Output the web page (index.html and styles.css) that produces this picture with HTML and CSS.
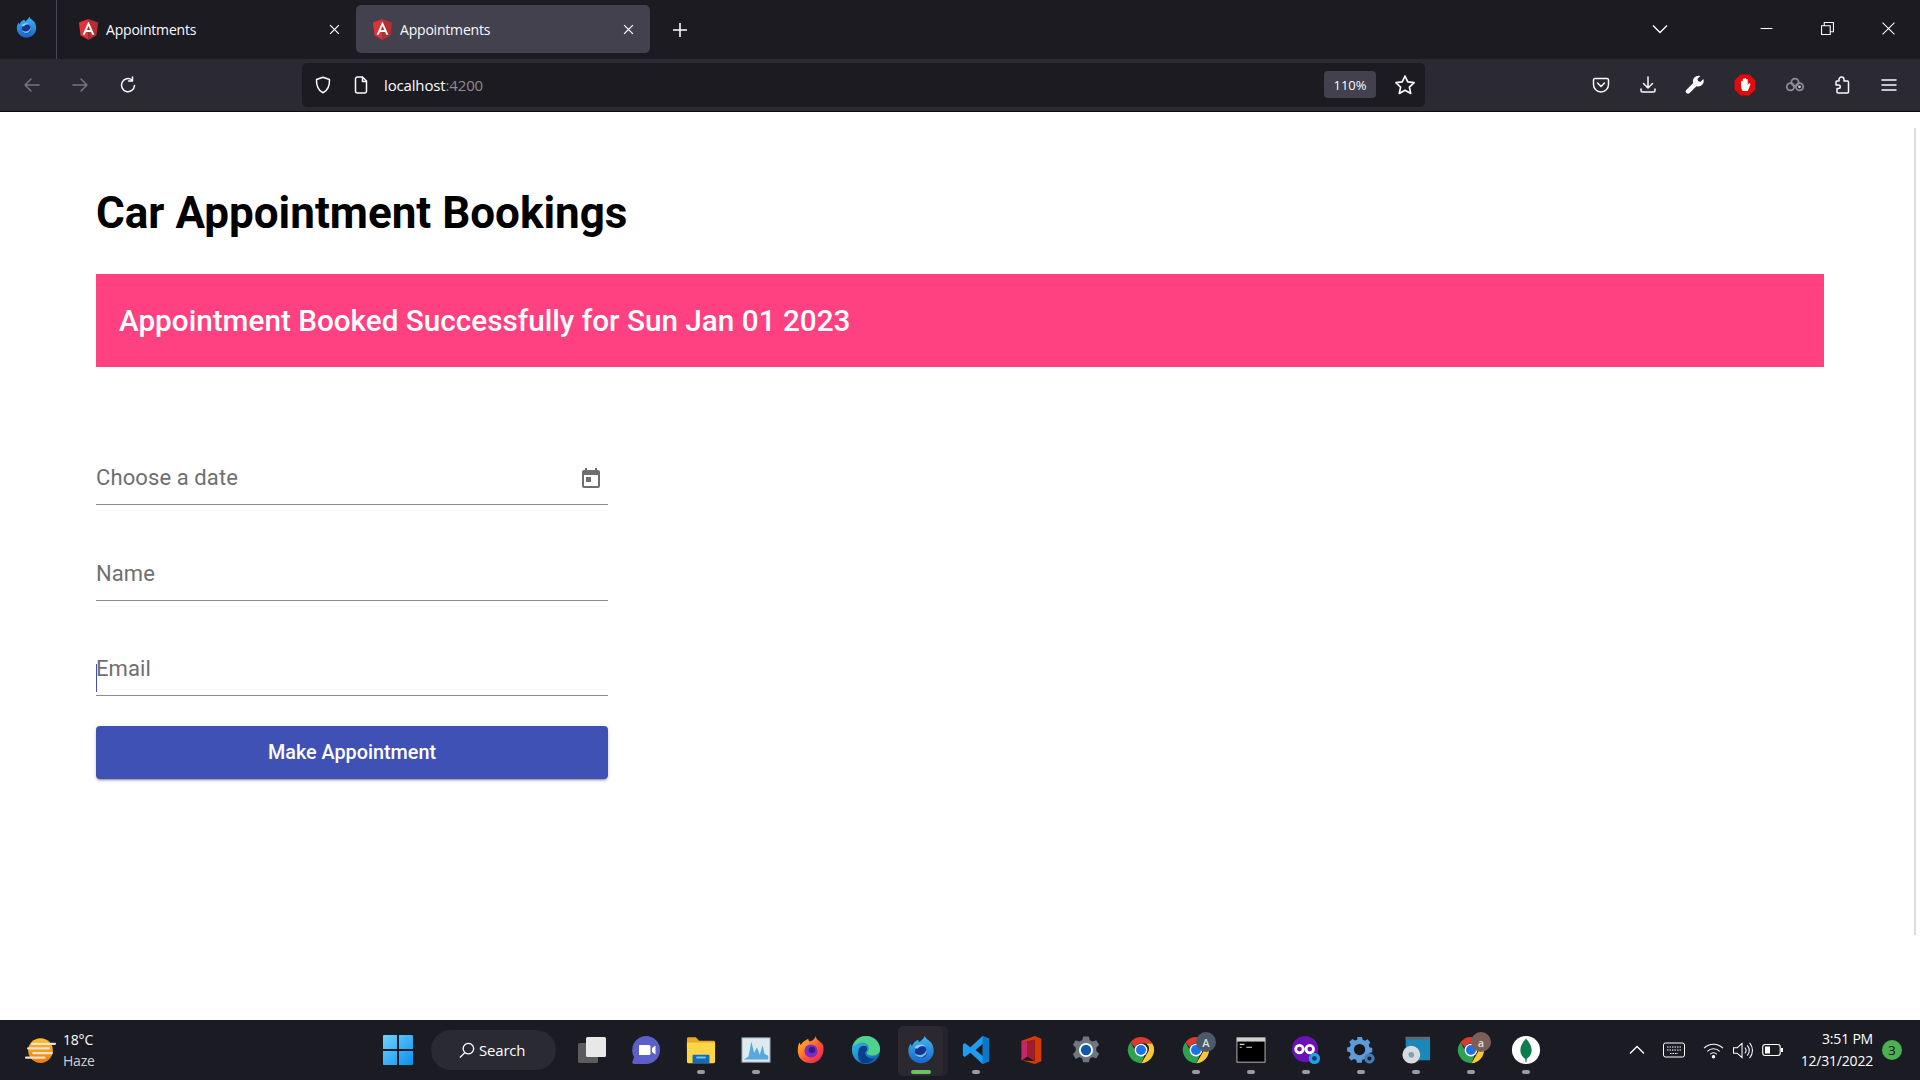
FILE: index.html
```html
<!DOCTYPE html>
<html lang="en">
<head>
<meta charset="utf-8">
<title>Appointments</title>
<link rel="stylesheet" href="styles.css">
</head>
<body>
<svg class="defs" width="0" height="0" aria-hidden="true">
  <defs>
    <symbol id="ng" viewBox="0 0 24 24">
      <path d="M12 1 2 4.6 3.6 18 12 23z" fill="#e23237"/>
      <path d="M12 1l10 3.6L20.4 18 12 23z" fill="#b52e31"/>
      <path d="M12 3.6 5.8 17.6h2.3l1.25-3.1h5.3l1.25 3.1h2.3zM13.8 12.6h-3.6L12 8.3z" fill="#fff"/>
    </symbol>
    <linearGradient id="ffd" x1="0" y1="0" x2="0" y2="1"><stop offset="0" stop-color="#3fb8f5"/><stop offset="1" stop-color="#1866c9"/></linearGradient>
    <symbol id="ffdev" viewBox="0 0 32 32">
      <path d="M20 1c1 3 4 4 5.500 6 2 1 4 5 4 10 0 7-6 13-13.500 13S2.500 24 2.500 17c0-3 1-6 2.500-8 0 1 .5 2 1.500 2.500C8 7.500 11 6 13 5c0 1 .5 2 1.500 2.500C16 6 19 4 20 1z" fill="url(#ffd)"/>
      <circle cx="16" cy="18" r="6.500" fill="#1c2f8c"/>
      <path d="M9 13c3-3 8-4 12-1-3-1-7 0-8 2-1 1-3 0-4-1z" fill="#7fd4fa"/>
      <path d="M22 15c1 5-2 8-6 9-3 0-6-2-7-5 2 2 5 3 8 2s4-3 5-6z" fill="#5ec4f6"/>
    </symbol>
    <symbol id="chrome" viewBox="0 0 32 32">
      <path d="M16 2a14 14 0 0 1 12.100 7H16a7 7 0 0 0-6.500 4.400L4.800 7.600A14 14 0 0 1 16 2z" fill="#db3a2e"/>
      <path d="M28.100 9A14 14 0 0 1 16.500 30l6-10.400A7 7 0 0 0 21.600 9z" fill="#fcc934"/>
      <path d="M4.800 7.600 10.900 18.400a7 7 0 0 0 8.800 3.500L16.500 30A14 14 0 0 1 4.800 7.600z" fill="#2fa24f"/>
      <circle cx="16" cy="16" r="6.800" fill="#fff"/>
      <circle cx="16" cy="16" r="5.300" fill="#1a73e8"/>
    </symbol>
  </defs>
</svg>

<header class="browser">
  <div class="tabstrip">
    <div class="side-logo"><svg class="i22" viewBox="0 0 32 32"><use href="#ffdev"/></svg></div>
    <div class="tab">
      <svg class="fav"><use href="#ng"/></svg>
      <span class="tab-title">Appointments</span>
      <svg class="tab-x" viewBox="0 0 10 10"><path d="M1 1l8 8M9 1l-8 8"/></svg>
    </div>
    <div class="tab tab-active">
      <svg class="fav"><use href="#ng"/></svg>
      <span class="tab-title">Appointments</span>
      <svg class="tab-x" viewBox="0 0 10 10"><path d="M1 1l8 8M9 1l-8 8"/></svg>
    </div>
    <svg class="newtab" viewBox="0 0 16 16"><path d="M8 1v14M1 8h14"/></svg>
    <svg class="tablist" viewBox="0 0 16 10"><path d="M1 1.500l7 7 7-7"/></svg>
    <div class="winbtns">
      <svg class="win" viewBox="0 0 12 12"><path d="M.5 6h11"/></svg>
      <svg class="win" viewBox="0 0 12 12"><path d="M.5 3.500h8v8h-8zM3 3.500V.5h8.500V9H8.500"/></svg>
      <svg class="win" viewBox="0 0 12 12"><path d="M.5.5l11 11M11.500.5l-11 11"/></svg>
    </div>
  </div>
  <div class="toolbar">
    <div class="nav">
      <svg class="tb dim" viewBox="0 0 18 18"><path d="M16 9H2M8 3 2 9l6 6"/></svg>
      <svg class="tb dim" viewBox="0 0 18 18"><path d="M2 9h14M10 3l6 6-6 6"/></svg>
      <svg class="tb" viewBox="0 0 18 18"><path d="M15.500 9.500A6.500 6.500 0 1 1 13 4M13.500 1v4h-4"/></svg>
    </div>
    <div class="urlbar">
      <svg class="tb" viewBox="0 0 18 18"><path d="M9 1.200 2.500 3.500C2.300 10 4 14.500 9 16.800c5-2.300 6.700-6.800 6.500-13.300z"/></svg>
      <svg class="tb page" viewBox="0 0 18 18"><path d="M3.500 3a2 2 0 0 1 2-2h5l4 4v10a2 2 0 0 1-2 2h-7a2 2 0 0 1-2-2zM10.500 1v4.500h4" /></svg>
      <span class="url">localhost<span class="port">:4200</span></span>
      <span class="zoom-pill">110%</span>
      <svg class="tb star" viewBox="0 0 20 20"><path d="M10 1.800l2.500 5.400 5.800.7-4.300 4 1.200 5.800L10 14.800l-5.200 2.900L6 11.900l-4.300-4 5.800-.7z"/></svg>
    </div>
    <div class="tools">
      <svg class="tb" viewBox="0 0 18 18"><path d="M3 2.500h12a1.500 1.500 0 0 1 1.500 1.500v4.500a7.500 7.500 0 0 1-15 0V4A1.500 1.500 0 0 1 3 2.500zM5.500 7 9 10.500 12.500 7"/></svg>
      <svg class="tb" viewBox="0 0 18 18"><path d="M9 1v10.500M4.500 7.500 9 12l4.500-4.500M2 13v1.500A1.500 1.500 0 0 0 3.500 16h11a1.500 1.500 0 0 0 1.500-1.500V13"/></svg>
      <svg class="tb-solid" viewBox="0 0 18 18"><path d="M16.500 3.500 13.800 6.200 11.800 5.500 11.100 3.500 13.800.9a5 5 0 0 0-6.400 6.300L1.300 13.300a2 2 0 0 0 2.900 2.900l6.100-6.100a5 5 0 0 0 6.200-6.600z" fill="#fbfbfe"/></svg>
      <svg class="tb-solid abp" viewBox="0 0 20 20"><path d="M6 .5h8L19.500 6v8L14 19.500H6L.5 14V6z" fill="#e20a0a"/><path d="M6.500 10V6.500a1 1 0 0 1 1.500 0V4.500a1 1 0 0 1 1.500 0V4a1 1 0 0 1 1.500 0v1a1 1 0 0 1 1.500 0v5l1-1.500a1 1 0 0 1 1.500 1L12.500 15.500H8C7 14.500 6.500 12.500 6.500 10z" fill="#fff"/></svg>
      <svg class="tb-solid" viewBox="0 0 22 18"><g fill="none" stroke="#8d8d92" stroke-width="2"><circle cx="11" cy="6" r="4"/><circle cx="6" cy="11" r="4"/><circle cx="16" cy="11" r="4"/></g><circle cx="16" cy="11" r="1.500" fill="#d0d0d4"/></svg>
      <svg class="tb" viewBox="0 0 18 18"><path d="M6 3.500a2.500 2.500 0 0 1 5 0V5h3.500a1 1 0 0 1 1 1v10a1 1 0 0 1-1 1H5a1 1 0 0 1-1-1v-3.500h1.500a1.700 1.700 0 0 0 0-3.500H3V6a1 1 0 0 1 1-1h2z"/></svg>
      <svg class="tb" viewBox="0 0 18 18"><path d="M2 4h14M2 9h14M2 14h14"/></svg>
    </div>
  </div>
</header>

<main class="page">
  <h1 class="title">Car Appointment Bookings</h1>
  <div class="banner">Appointment Booked Successfully for Sun Jan 01 2023</div>
  <form class="form">
    <div class="field field-first">
      <span class="ph">Choose a date</span>
      <svg class="cal" viewBox="0 0 24 24"><path d="M19 4h-1V2h-2v2H8V2H6v2H5a2 2 0 0 0-2 2v14a2 2 0 0 0 2 2h14a2 2 0 0 0 2-2V6a2 2 0 0 0-2-2zm0 16H5V9h14zM7 11h5v5H7z"/></svg>
    </div>
    <div class="field"><span class="ph">Name</span></div>
    <div class="field"><span class="caret"></span><span class="ph">Email</span></div>
    <div class="submit">Make Appointment</div>
  </form>
  <div class="thumb"></div>
</main>

<footer class="taskbar">
  <div class="weather">
    <svg class="weather-icon" viewBox="0 0 32 32">
      <defs><linearGradient id="sun" x1="0" y1="0" x2="0" y2="1"><stop offset="0" stop-color="#fbc02d"/><stop offset="1" stop-color="#ef7a10"/></linearGradient></defs>
      <circle cx="16" cy="16" r="12" fill="url(#sun)"/>
      <path d="M8 9.500h22M4 14h20M9 18.500h18M2 23h18" stroke="#e9e2cf" stroke-width="2.200" stroke-linecap="round"/>
    </svg>
    <div class="weather-text"><span class="temp">18°C</span><span class="cond">Haze</span></div>
  </div>
  <div class="apps">
    <div class="slot winslot"><svg class="app" viewBox="0 0 30 30"><defs><linearGradient id="win" x1="0" y1="0" x2="1" y2="1"><stop offset="0" stop-color="#6fd3fb"/><stop offset="1" stop-color="#0a8ff0"/></linearGradient></defs><path d="M0 1a1 1 0 0 1 1-1h13v14H0zM16 0h13a1 1 0 0 1 1 1v13H16zM0 16h14v14H1a1 1 0 0 1-1-1zM16 16h14v13a1 1 0 0 1-1 1H16z" fill="url(#win)"/></svg></div>
    <div class="search">
      <svg class="search-icon" viewBox="0 0 18 18"><path d="M11 1.500a5.500 5.500 0 1 1-.01 0zM7 11.500 2 16.500"/></svg>
      <span>Search</span>
    </div>
    <div class="slot tv"><svg class="app" viewBox="0 0 30 30"><rect x="1" y="8" width="20" height="20" rx="1.500" fill="#5c5c5c"/><rect x="9" y="2" width="20" height="20" rx="1.500" fill="#e8e8e8"/></svg></div>
    <div class="slot chat"><svg class="app" viewBox="0 0 30 30"><path d="M15 1a14 14 0 0 1 0 28H3c-1.500 0-2-1-1.500-2.500L3 22A14 14 0 0 1 15 1z" fill="#5b5fc7"/><path d="M8 10h10a1.500 1.500 0 0 1 1.500 1.500v7A1.500 1.500 0 0 1 18 20H8zM21 13l3.500-2.500v9L21 17z" fill="#fff"/></svg></div>
    <div class="slot run"><svg class="app" viewBox="0 0 32 32"><path d="M1 4a1.500 1.500 0 0 1 1.500-1.500h8L14 6h15.500A1.500 1.500 0 0 1 31 7.500v8H1z" fill="#e9a91f"/><path d="M1 8h30v20.500a1.500 1.500 0 0 1-1.500 1.500h-27A1.500 1.500 0 0 1 1 28.500z" fill="#fdd648"/><path d="M8 21h16a1 1 0 0 1 1 1v8H7v-8a1 1 0 0 1 1-1z" fill="#0f6cbd"/><path d="M11 24h10" stroke="#7cc5f5" stroke-width="2"/></svg></div>
    <div class="slot run"><svg class="app" viewBox="0 0 32 32"><rect x="1" y="3" width="30" height="26" fill="#dfe9f0" stroke="#8da0ad"/><path d="M3 26l5-3 3-16 3 12 3-6 3 8 3-10 2 9 4 2v4H3z" fill="#56a9df"/></svg></div>
    <div class="slot"><svg class="app" viewBox="0 0 32 32"><defs><linearGradient id="fx" x1="0" y1="0" x2="1" y2="1"><stop offset="0" stop-color="#ffd21e"/><stop offset=".55" stop-color="#ff5a2c"/><stop offset="1" stop-color="#e3116c"/></linearGradient></defs><path d="M21 1c0 4 6 6 8 10 2 9-3 19-13 19S1 23 2 15c0-3 1-6 2-7l1 3c2-4 6-6 8-7 0 1 1 3 2 3 3-1 5-3 6-6z" fill="url(#fx)"/><circle cx="16" cy="17" r="7" fill="#7a2bc8"/><circle cx="17" cy="16" r="3.500" fill="#3a1a90"/></svg></div>
    <div class="slot"><svg class="app" viewBox="0 0 32 32"><defs><linearGradient id="ed" x1="0" y1="0" x2="1" y2="1"><stop offset="0" stop-color="#35c1f1"/><stop offset="1" stop-color="#0c59a4"/></linearGradient></defs><circle cx="16" cy="16" r="15" fill="url(#ed)"/><path d="M16 1c8 0 15 6 15 14 0 5-4 7-8 7-3 0-6-1-6-3 0-1 2-2 2-5s-3-6-7-6C8 8 3 11 1.500 13 3 6 9 1 16 1z" fill="#4ed28c"/><path d="M8 17c0-4 4-6 8-5 2 2 1 5-1 7 0 4 5 7 10 6-3 4-8 6-13 5-5-3-5-9-4-13z" fill="#0a3d8c"/></svg></div>
    <div class="slot run run-active"><span class="stack"></span><svg class="app ffdev-task"><use href="#ffdev"/></svg></div>
    <div class="slot run"><svg class="app" viewBox="0 0 32 32"><path d="M23 1 30 4v24l-7 3-13-12-6 4.500L2 22V10l2-1.500 6 4.500z" fill="#1f9cf0"/><path d="M23 1v30l7-3V4z" fill="#0d78c9"/><path d="M23 9.500 15.500 16l7.500 6.500z" fill="#1a1a22"/></svg></div>
    <div class="slot"><svg class="app" viewBox="0 0 32 32"><path d="M20 1 27 4v24l-7 3-14-4 14 1V5L12 7v16l-6 4V6z" fill="#d83b01"/><path d="M12 7l8-2v23l-8-5z" fill="#a01d2b"/><path d="M6 6l6 1v16l-6 4z" fill="#c0286a"/></svg></div>
    <div class="slot"><svg class="app" viewBox="0 0 32 32"><path d="M13 1h6l1 4 3 1.500L27 5l3 5-3 3v3.500l3 3-3 5-4-1.500-3 1.500-1 4h-6l-1-4-3-1.500L5 25l-3-5 3-3.500V13l-3-3 3-5 4 1.500L12 5z" fill="#6d7781" transform="translate(0 .5)"/><circle cx="16" cy="16" r="7.500" fill="#fff"/><circle cx="16" cy="16" r="5.500" fill="#0f5aa8"/></svg></div>
    <div class="slot"><svg class="app"><use href="#chrome"/></svg></div>
    <div class="slot run"><svg class="app"><use href="#chrome"/></svg><span class="avatar av-a">A</span></div>
    <div class="slot run"><svg class="app" viewBox="0 0 32 32"><rect x="1" y="3" width="30" height="26" fill="#000" stroke="#bdbdbd"/><rect x="1" y="3" width="30" height="4" fill="#cfcfcf"/><path d="M4 10h5M4 13h2M11 13h6" stroke="#ddd" stroke-width="1.200"/></svg></div>
    <div class="slot run"><svg class="app" viewBox="0 0 32 32"><circle cx="15" cy="15" r="14" fill="#6a12b8"/><path d="M5 15a4 4 0 0 1 8 0 4 4 0 0 1-8 0zM16 15a4 4 0 0 1 8 0 4 4 0 0 1-8 0z" fill="none" stroke="#fff" stroke-width="3"/><circle cx="25" cy="25" r="6" fill="#2a9fe0"/><circle cx="25" cy="25" r="2.500" fill="#0b3a78"/></svg></div>
    <div class="slot run"><svg class="app" viewBox="0 0 32 32"><path d="M12 2h5l.8 3 2.500 1 2.700-1.500 3 3.500-1.800 2.500.8 2.500 3 .8v4.600l-3 .8-.8 2.300 1.500 2.700-3.300 3-2.500-1.500-2.400.8-.8 3h-5l-.8-3-2.500-.8-2.700 1.500-3-3.300L5 21l-.8-2.500-3-.8v-4.500l3-.8.800-2.400-1.500-2.700L6.800 4.300l2.700 1.500L12 5z" fill="#5d9ad6"/><circle cx="14.500" cy="15.500" r="6" fill="#16161e"/><circle cx="25" cy="25" r="5.500" fill="#3f7fb8"/><circle cx="25" cy="25" r="2.200" fill="#16161e"/></svg></div>
    <div class="slot run"><svg class="app" viewBox="0 0 32 32"><rect x="5" y="2" width="26" height="25" fill="#1a88b8"/><rect x="5" y="2" width="26" height="3" fill="#5a6b75"/><circle cx="11" cy="21" r="9.500" fill="#d8dadc"/><circle cx="11" cy="21" r="3" fill="#7f9fb8"/></svg></div>
    <div class="slot run"><svg class="app"><use href="#chrome"/></svg><span class="avatar av-b">a</span></div>
    <div class="slot run"><svg class="app" viewBox="0 0 32 32"><circle cx="16" cy="16" r="15" fill="#fff"/><path d="M16 4c4 4 6 8 6 12 0 5-3 8-5.200 9.500L16.500 29h-1l-.3-3.500C13 24 10 21 10 16c0-4 2-8 6-12z" fill="#0f7c4d"/></svg></div>
  </div>
  <div class="tray">
    <svg class="tray-i chev" viewBox="0 0 16 10"><path d="M1 8.500l7-7 7 7"/></svg>
    <svg class="tray-i kbd" viewBox="0 0 22 16"><rect x=".5" y="1" width="21" height="14" rx="2"/><path d="M4 5h14M4 8h14M7 11.500h8" stroke-dasharray="1.500 1"/></svg>
    <svg class="tray-i wifi" viewBox="0 0 22 18"><path d="M1 6.500a14 14 0 0 1 20 0M4.500 10a9 9 0 0 1 13 0M7.500 13a4.500 4.500 0 0 1 7 0"/><circle cx="11" cy="15.500" r="1.300" fill="#fff"/></svg>
    <svg class="tray-i vol" viewBox="0 0 22 18"><path d="M1.500 6v6h4l5 4.500v-15l-5 4.500zM13.500 6a4 4 0 0 1 0 6M16 3.500a8 8 0 0 1 0 11M18.500 1a12 12 0 0 1 0 16"/></svg>
    <svg class="tray-i batt" viewBox="0 0 22 14"><rect x=".7" y="1.500" width="17.500" height="11" rx="2.500"/><rect x="3" y="3.500" width="5" height="7" fill="#fff" stroke="none"/><path d="M20 5v4" stroke-width="2"/></svg>
    <div class="clock"><span>3:51 PM</span><span>12/31/2022</span></div>
    <span class="notif">3</span>
  </div>
</footer>
</body>
</html>
```

FILE: styles.css
```css
* { box-sizing: border-box; }
html, body { margin: 0; height: 100%; overflow: hidden; }
body {
  width: 1920px;
  height: 1080px;
  display: flex;
  flex-direction: column;
  background: #fff;
  font-family: Roboto, sans-serif;
}
.defs { position: absolute; }

/* Browser chrome */
.browser { flex: 0 0 113px; display: flex; flex-direction: column; color: #fbfbfe; font-family: "Open Sans", sans-serif; }
.tabstrip { height: 59px; background: #1c1b22; display: flex; align-items: center; }
.side-logo { width: 57px; height: 59px; border-right: 1px solid #4a4a52; display: flex; align-items: center; padding-left: 15px; padding-bottom: 4px; }
.i22 { width: 23px; height: 23px; }
.tab { width: 294px; height: 48px; margin-left: 5px; border-radius: 5px; display: flex; align-items: center; padding: 0 16px 0 15px; margin-top: -1px; }
.tab + .tab { margin-left: 0; }
.tab-active { background: #42414d; margin-left: 6px; }
.fav { width: 23px; height: 23px; flex: none; }
.tab-title { font-size: 14px; margin-left: 6px; flex: 1; letter-spacing: -.2px; }
.tab-x { width: 11px; height: 11px; fill: none; stroke: #fbfbfe; stroke-width: 1.200; }
.newtab { width: 16px; height: 16px; margin-left: 22px; fill: none; stroke: #fbfbfe; stroke-width: 1.600; }
.tablist { width: 16px; height: 10px; margin-left: 964px; fill: none; stroke: #fbfbfe; stroke-width: 1.400; margin-top: -2px; }
.winbtns { display: flex; margin-left: auto; padding-right: 25px; gap: 48px; margin-top: -2px; }
.win { width: 13px; height: 13px; fill: none; stroke: #fbfbfe; stroke-width: 1; }

.toolbar { height: 53px; background: #2b2a33; border-bottom: 1px solid #0c0c0d; display: flex; align-items: center; padding-right: 22px; }
.nav { display: flex; gap: 30px; padding-left: 23px; width: 302px; }
.tb { width: 18px; height: 18px; fill: none; stroke: #fbfbfe; stroke-width: 1.500; stroke-linejoin: round; stroke-linecap: round; flex: none; }
.dim { stroke: #76757c; }
.tb-solid { width: 20px; height: 20px; flex: none; }
.abp { width: 22px; height: 22px; }
.urlbar { width: 1123px; height: 44px; margin-top: -1px; background: #1c1b22; border-radius: 5px; display: flex; align-items: center; padding-left: 12px; }
.page { margin-left: 20px; }
.url { font-size: 15px; margin-left: 14px; flex: 1; letter-spacing: -.15px; }
.port { color: #8c8b91; }
.zoom-pill { width: 52px; height: 27px; background: #42414d; border-radius: 4px; font-size: 13px; display: flex; align-items: center; justify-content: center; }
.star { width: 22px; height: 22px; margin: 0 9px 0 18px; }
.tools { display: flex; margin-left: auto; width: 306px; justify-content: space-between; align-items: center; }

/* Page */
.page-wrap { display: block; }
main.page { flex: 1; margin: 0; padding: 0 96px; position: relative; min-height: 0; }
.title { margin: 0; padding-top: 73px; font: 700 44px/54px Roboto, sans-serif; color: #000; }
.banner { margin-top: 34px; height: 93px; background: #ff4081; color: #fff; padding: 0 23px; display: flex; align-items: center; font: 500 29.700px Roboto, sans-serif; }
.form { width: 512px; display: flex; flex-direction: column; }
.field { height: 95.500px; border-bottom: 1px solid #8c8c8c; display: flex; align-items: flex-end; position: relative; padding-bottom: 8px; }
.field-first { height: 138px; }
.ph { font-size: 22px; line-height: 37px; color: #6f6f6f; letter-spacing: .1px; flex: 1; }
.cal { width: 24px; height: 24px; fill: #6f6f6f; margin: 0 5px 6px 0; }
.caret { position: absolute; left: 0; bottom: 3px; width: 1px; height: 28px; background: #3f51b5; }
.submit { margin-top: 30px; height: 53px; background: #3f51b5; color: #fff; border-radius: 4px; display: flex; align-items: center; justify-content: center; font: 500 19.800px Roboto, sans-serif; box-shadow: 0 3px 1px -2px rgba(0,0,0,.2), 0 2px 2px rgba(0,0,0,.14), 0 1px 5px rgba(0,0,0,.12); }
.thumb { position: absolute; right: 4px; top: 15px; width: 2px; height: 807px; background: #dcdcdc; }

/* Taskbar */
.taskbar { flex: 0 0 60px; background: #1b1b24; color: #fff; display: flex; align-items: center; font-family: "Open Sans", sans-serif; position: relative; }
.weather { width: 382px; padding-left: 24px; display: flex; align-items: center; gap: 6px; }
.weather-icon { width: 33px; height: 33px; }
.weather-text { display: flex; flex-direction: column; font-size: 14px; line-height: 21px; letter-spacing: -.2px; }
.cond { color: #cfcfd2; }
.apps { display: flex; align-items: center; height: 60px; }
.slot { width: 55px; height: 60px; display: flex; align-items: center; justify-content: center; position: relative; flex: none; }
.winslot { width: 32px; margin-right: 17px; }
.tv { width: 55px; margin-left: 4px; }
.chat { width: 54px; margin-right: 0; }
.app { width: 30px; height: 30px; position: relative; }
.run::after { content: ""; position: absolute; left: 50%; bottom: 6px; width: 8px; height: 4px; margin-left: -4px; border-radius: 2px; background: #9b9b9f; }
.run-active { z-index: 0; }
.run-active::before { content: ""; position: absolute; left: 5px; right: 5px; top: 6px; bottom: 4px; border-radius: 5px; background: #2c2830; z-index: -1; }
.run-active::after { width: 20px; margin-left: -10px; background: #6cc160; }
.stack { position: absolute; left: 44px; top: 6px; width: 11px; bottom: 4px; border-radius: 0 5px 5px 0; background: #25222b; z-index: -2; }
.ffdev-task { width: 30px; height: 30px; }
.avatar { position: absolute; left: 28px; top: 12px; width: 20px; height: 20px; border-radius: 50%; display: flex; align-items: center; justify-content: center; font-size: 11px; font-weight: 600; color: #ddd; }
.av-a { background: #4b5a68; }
.av-b { background: #7c5f54; }
.search { width: 125px; height: 40px; margin-right: 4px; border-radius: 20px; background: #2a2a33; display: flex; align-items: center; padding-left: 27px; gap: 4px; font-size: 15px; letter-spacing: -.2px; }
.search-icon { width: 17px; height: 17px; fill: none; stroke: #fff; stroke-width: 1.400; }
.tray { margin-left: auto; padding-right: 18px; display: flex; align-items: center; }
.tray-i { fill: none; stroke: #fff; stroke-width: 1.100; flex: none; }
.chev { width: 16px; height: 10px; margin-right: 18px; stroke-width: 1.300; }
.kbd { width: 22px; height: 16px; margin-right: 18px; stroke-width: 1; }
.wifi { width: 21px; height: 17px; margin-right: 8px; }
.vol { width: 21px; height: 17px; margin-right: 9px; }
.batt { width: 22px; height: 14px; margin-right: 17px; }
.clock { display: flex; flex-direction: column; align-items: flex-end; font-size: 14px; line-height: 22px; letter-spacing: -.2px; }
.notif { width: 20px; height: 20px; margin-left: 9px; border-radius: 50%; background: #4caf50; color: #111; font-size: 13px; display: flex; align-items: center; justify-content: center; }
```
